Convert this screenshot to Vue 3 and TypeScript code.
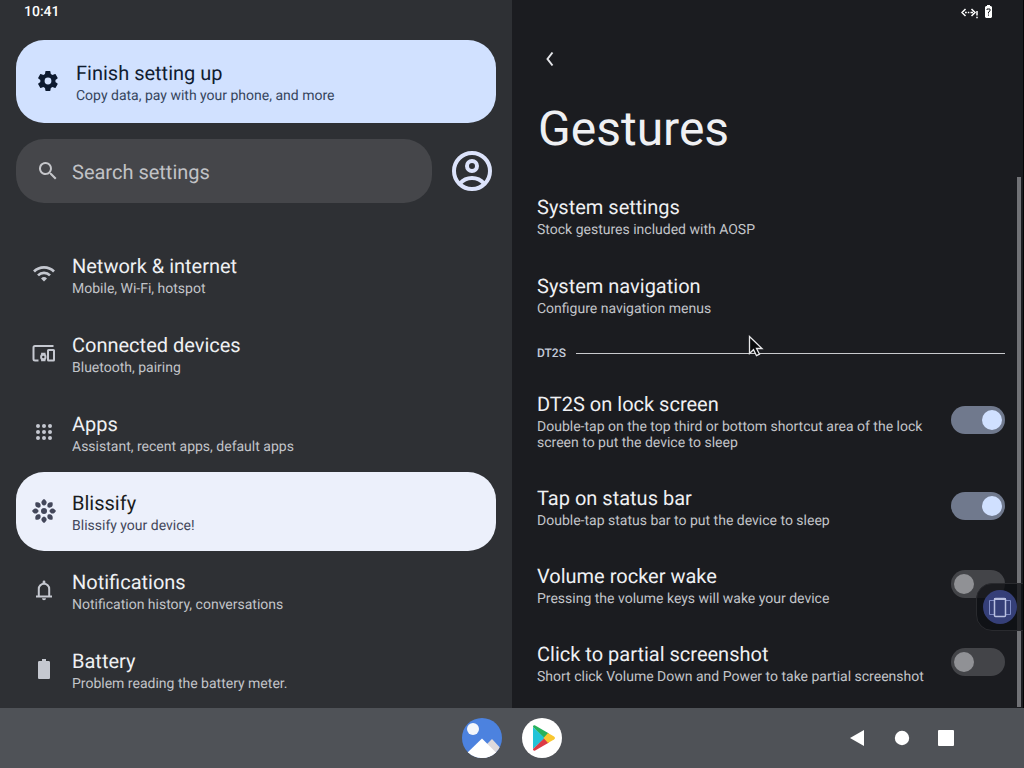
<script setup lang="ts">
import { ref } from 'vue'

interface Category {
  id: string
  title: string
  summary: string
}

interface Gesture {
  id: string
  title: string
  summary: string
  on: boolean
}

const selected = ref('blissify')
const query = ref('')

const categories: Category[] = [
  { id: 'network', title: 'Network & internet', summary: 'Mobile, Wi-Fi, hotspot' },
  { id: 'devices', title: 'Connected devices', summary: 'Bluetooth, pairing' },
  { id: 'apps', title: 'Apps', summary: 'Assistant, recent apps, default apps' },
  { id: 'blissify', title: 'Blissify', summary: 'Blissify your device!' },
  { id: 'notifications', title: 'Notifications', summary: 'Notification history, conversations' },
  { id: 'battery', title: 'Battery', summary: 'Problem reading the battery meter.' },
]

const gestures = ref<Gesture[]>([
  {
    id: 'lock',
    title: 'DT2S on lock screen',
    summary: 'Double-tap on the top third or bottom shortcut area of the lock screen to put the device to sleep',
    on: true,
  },
  { id: 'status', title: 'Tap on status bar', summary: 'Double-tap status bar to put the device to sleep', on: true },
  { id: 'volume', title: 'Volume rocker wake', summary: 'Pressing the volume keys will wake your device', on: false },
  {
    id: 'partial',
    title: 'Click to partial screenshot',
    summary: 'Short click Volume Down and Power to take partial screenshot',
    on: false,
  },
])

const petals = [0, 45, 90, 135, 180, 225, 270, 315]
const dots = [6, 12, 18]
</script>

<template>
  <div class="screen">
    <div class="panes">
      <nav class="pane left" aria-label="Settings">
        <div class="status">10:41</div>

        <a class="suggestion" href="#setup">
          <svg class="icon" viewBox="0 0 24 24" aria-hidden="true">
            <path fill="#0d1a30" fill-rule="evenodd" d="M19.5 12c0-.3 0-.6-.1-1l2.100-1.600c.2-.1.2-.4.1-.6l-2-3.500c-.1-.2-.4-.3-.6-.2l-2.500 1c-.5-.4-1.100-.7-1.700-1l-.4-2.600c0-.3-.2-.5-.5-.5h-4c-.2 0-.4.2-.5.4l-.4 2.700c-.6.200-1.100.6-1.700 1l-2.500-1c-.2-.1-.5 0-.6.2l-2 3.500c-.1.200 0 .5.100.600l2.100 1.600c0 .3-.1.700-.1 1s0 .700.100 1l-2.100 1.600c-.2.100-.2.400-.1.600l2 3.500c.1.200.4.300.6.200l2.500-1c.5.400 1.100.700 1.700 1l.4 2.700c0 .2.2.4.500.4h4c.2 0 .5-.2.500-.4l.4-2.700c.6-.2 1.100-.6 1.700-1l2.500 1c.2.100.5 0 .6-.2l2-3.500c.1-.2.100-.5-.1-.6l-2.100-1.600c.1-.3.100-.6.100-1ZM12 15.400a3.400 3.400 0 1 1 0-6.800 3.400 3.400 0 0 1 0 6.800Z" />
          </svg>
          <span class="texts">
            <span class="title">Finish setting up</span>
            <span class="summary">Copy data, pay with your phone, and more</span>
          </span>
        </a>

        <div class="search-row">
          <label class="search">
            <svg class="icon" viewBox="0 0 24 24" aria-hidden="true">
              <path fill="#c5c6ca" d="M15.500 14h-.8l-.3-.3A6.500 6.500 0 1 0 13.700 14.400l.3.300v.8l5 5 1.500-1.500-5-5Zm-6 0a4.500 4.500 0 1 1 0-9 4.500 4.500 0 0 1 0 9Z" />
            </svg>
            <input v-model="query" type="text" placeholder="Search settings" aria-label="Search settings" />
          </label>
          <button class="avatar" type="button" aria-label="Account">
            <svg viewBox="0 0 40 40" aria-hidden="true" fill="none" stroke="#dce3fb" stroke-width="4">
              <circle cx="20" cy="20" r="18" />
              <circle cx="20" cy="15" r="5" />
              <path d="M8 32.500c3-3.500 7-5.500 12-5.500s9 2 12 5.500" />
            </svg>
          </button>
        </div>

        <div class="categories">
          <a
            v-for="item in categories"
            :key="item.id"
            class="category"
            :class="{ selected: item.id === selected }"
            :href="'#' + item.id"
            @click="selected = item.id"
          >
            <svg class="icon" viewBox="0 0 24 24" aria-hidden="true" fill="none" stroke="currentColor" stroke-width="2">
              <g v-if="item.id === 'network'" stroke-width="2.700">
                <path d="M2 9.500a14.200 14.200 0 0 1 20 0" />
                <path d="M6 13.400a8.600 8.600 0 0 1 12 0" />
                <path d="M12 19.500l-3-3a4.300 4.300 0 0 1 6 0Z" fill="currentColor" stroke="none" />
              </g>
              <g v-else-if="item.id === 'devices'" stroke-width="2">
                <path d="M21.500 5H3a1.500 1.500 0 0 0-1.500 1.500v11.500a1.500 1.500 0 0 0 1.500 1.500H6.500" />
                <rect x="16" y="9" width="6" height="10.500" rx=".5" />
                <circle cx="11.300" cy="16" r="2.200" />
                <path d="M9.800 14v-1.500h3V14M9.800 18v1.500h3V18" stroke-width="1.400" />
              </g>
              <g v-else-if="item.id === 'apps'" fill="currentColor" stroke="none">
                <template v-for="y in dots" :key="y">
                  <circle v-for="x in dots" :key="x" :cx="x" :cy="y" r="2" />
                </template>
              </g>
              <g v-else-if="item.id === 'blissify'" fill="currentColor" stroke="none">
                <circle cx="12" cy="12" r="3" />
                <path v-for="a in petals" :key="a" d="M12 0c1.600 1 2.600 2.200 2.600 3.500S13.500 6.200 12 6.600C10.500 6.200 9.400 4.800 9.400 3.500S10.400 1 12 0Z" :transform="`rotate(${a} 12 12)`" />
              </g>
              <g v-else-if="item.id === 'notifications'">
                <path d="M4 18.500h16M6.800 18v-7a5.200 5.200 0 0 1 10.400 0v7" />
                <path d="M10.600 5.500V4a1.400 1.400 0 0 1 2.800 0v1.500ZM10 20.300h4a2 2 0 0 1-4 0Z" fill="currentColor" stroke="none" />
              </g>
              <path v-else d="M7.300 4H10V2h4v2h2.700c.7 0 1.300.6 1.300 1.300v15.400c0 .7-.6 1.300-1.300 1.300H7.300c-.7 0-1.300-.6-1.300-1.300V5.300C6 4.600 6.600 4 7.300 4Z" fill="currentColor" stroke="none" />
            </svg>
            <span class="texts">
              <span class="title">{{ item.title }}</span>
              <span class="summary">{{ item.summary }}</span>
            </span>
          </a>
        </div>
      </nav>

      <main class="pane right">
        <div class="status indicators">
          <svg class="net" viewBox="0 0 18 12" aria-hidden="true" fill="none" stroke="#fff" stroke-width="1.500">
            <path d="M4.500 2 1 5.500 4.500 9M10.500 2 14 5.500 10.500 9M4 5.500h1.800M6.800 5.500h1.500M9.500 5.500h2.500M16 4v4.500M16 9.700v1.600" />
          </svg>
          <svg class="bat" viewBox="0 0 7 13" aria-hidden="true">
            <path fill="#fff" d="M2 0h3v1h1l1 1v10l-1 1H1l-1-1V2l1-1h1Z" />
            <path fill="none" stroke="#1b1c20" d="M2 5V4h3v2L3.500 7v1.500M3.500 9.500v1.200" />
          </svg>
        </div>

        <button class="back" type="button" aria-label="Back">
          <svg viewBox="0 0 10 16" aria-hidden="true" fill="none" stroke="#e4e5e8" stroke-width="2">
            <path d="M7.500 1.500 2.500 8l5 6.500" />
          </svg>
        </button>

        <h1>Gestures</h1>

        <a class="row" href="#system-settings">
          <span class="texts">
            <span class="title">System settings</span>
            <span class="summary">Stock gestures included with AOSP</span>
          </span>
        </a>
        <a class="row" href="#system-navigation">
          <span class="texts">
            <span class="title">System navigation</span>
            <span class="summary">Configure navigation menus</span>
          </span>
        </a>

        <h2>DT2S</h2>

        <label v-for="g in gestures" :key="g.id" class="row toggle" :for="g.id">
          <span class="texts">
            <span class="title">{{ g.title }}</span>
            <span class="summary">{{ g.summary }}</span>
          </span>
          <input :id="g.id" v-model="g.on" class="switch" type="checkbox" role="switch" />
        </label>

        <div class="scrollbar"></div>
        <button class="floating" type="button" aria-label="Rotate screen">
          <svg viewBox="0 0 34 34" aria-hidden="true" fill="none" stroke="#b9c0e0">
            <path d="M11 10.500H6.500v14H11M23 10.500h4.500v14H23" stroke="#7f8bc4" />
            <rect x="11.500" y="8.500" width="11" height="18" rx="1" stroke-width="1.500" />
            <path d="M11 9h12" stroke-width="2" />
          </svg>
        </button>
        <svg class="cursor" viewBox="0 0 16 22" aria-hidden="true">
          <path d="M1.500 1.500v17l4-3.800 3 6 3-1.500-3-5.700h5.500Z" fill="#08090b" stroke="#e8e8ea" stroke-width="1.300" />
        </svg>
      </main>
    </div>

    <footer class="taskbar">
      <span></span>
      <div class="apps">
        <button type="button" aria-label="Gallery">
          <svg viewBox="0 0 40 40" aria-hidden="true">
            <defs><clipPath id="disc"><circle cx="20" cy="20" r="20" /></clipPath></defs>
            <g clip-path="url(#disc)">
              <rect width="40" height="40" fill="#4c82df" />
              <circle cx="11" cy="11" r="6" fill="#f3f6fb" />
              <path d="M18 33 30 21l12 13v8H18Z" fill="#ddd9dc" />
              <path d="M4 36 20 20.500 34 34.500V42H4Z" fill="#fff" />
            </g>
          </svg>
        </button>
        <button type="button" aria-label="Play Store">
          <svg viewBox="0 0 40 40" aria-hidden="true">
            <circle cx="20" cy="20" r="20" fill="#fff" />
            <path d="M11 9v22L23 20Z" fill="#22c3d8" />
            <path d="M11 9c0-1.500 1-2 2.200-1.400L27 15.500 22.500 20Z" fill="#28b25b" />
            <path d="M11 31c0 1.500 1 2 2.200 1.400L27 24.500 22.500 20Z" fill="#dc3a46" />
            <path d="M26 15l6 3.500c1.300.8 1.300 2.200 0 3L26 25l-4.500-5Z" fill="#f9c730" />
          </svg>
        </button>
      </div>
      <div class="keys">
        <button type="button" aria-label="Back"><svg viewBox="0 0 16 16" aria-hidden="true"><path d="M14 0v16L0 8Z" fill="#fff" /></svg></button>
        <button type="button" aria-label="Home"><svg viewBox="0 0 16 16" aria-hidden="true"><circle cx="8" cy="8" r="7.200" fill="#fff" /></svg></button>
        <button type="button" aria-label="Recent apps"><svg viewBox="0 0 16 16" aria-hidden="true"><rect width="16" height="16" rx="1" fill="#fff" /></svg></button>
      </div>
    </footer>
  </div>
</template>

<style>
body {
  margin: 0;
  background: #2e3034;
}
</style>

<style scoped>
.screen {
  display: flex;
  flex-direction: column;
  height: 100vh;
  font-family: Roboto, "Liberation Sans", sans-serif;
  text-rendering: geometricPrecision;
  color: #eff0f3;
}

button {
  display: flex;
  padding: 0;
  border: 0;
  background: none;
  cursor: pointer;
}

a {
  color: inherit;
  text-decoration: none;
}

.panes {
  flex: 1;
  min-height: 0;
  display: grid;
  grid-template-columns: 1fr 1fr;
}

.pane {
  overflow: hidden;
}

.left {
  padding: 0 16px;
  background: #2e3034;
}

.right {
  position: relative;
  padding: 0 18px 0 25px;
  background: #1b1c20;
  border-right: 1px solid #050506;
}

.status {
  display: flex;
  align-items: center;
  height: 24px;
  margin-bottom: 16px;
  padding-left: 8px;
  font-size: 14px;
  font-weight: 500;
  color: #fff;
}

.indicators {
  justify-content: flex-end;
  gap: 6px;
  padding-right: 13px;
}

.net {
  width: 18px;
  height: 12px;
  margin-top: 2px;
}

.bat {
  width: 7px;
  height: 13px;
  margin-bottom: 2px;
}

.icon {
  flex: none;
  width: 24px;
  height: 24px;
}

.texts {
  display: flex;
  flex-direction: column;
  gap: 3px;
  min-width: 0;
}

.title {
  font-size: 20px;
  line-height: 24px;
}

.summary {
  font-size: 14px;
  line-height: 16px;
  color: #c2c4c9;
}

.suggestion {
  display: flex;
  align-items: center;
  gap: 16px;
  padding: 21px 20px 19px;
  border-radius: 28px;
  background: #d1e1ff;
  color: #101c30;
}

.suggestion .icon,
.category .icon {
  margin-bottom: 4px;
}

.suggestion .summary {
  color: #36455d;
}

.search-row {
  display: flex;
  align-items: center;
  gap: 20px;
  margin: 16px 0 32px;
  padding-right: 4px;
}

.search {
  flex: 1;
  display: flex;
  align-items: center;
  gap: 12px;
  height: 64px;
  padding: 0 20px;
  border-radius: 28px;
  background: #45464a;
}

.search input {
  flex: 1;
  min-width: 0;
  padding: 2px 0 0;
  border: 0;
  outline: 0;
  background: none;
  font: 20px Roboto, "Liberation Sans", sans-serif;
  text-rendering: inherit;
  color: #eff0f3;
}

.search input::placeholder {
  color: #c1c2c6;
  opacity: 1;
}

.avatar svg {
  width: 40px;
  height: 40px;
}

.category {
  display: flex;
  align-items: center;
  gap: 16px;
  padding: 19px 16px 17px;
  border-radius: 28px;
}

.category .icon {
  color: #c5c8d0;
}

.category.selected {
  background: #ecf0fb;
  color: #1a1c20;
}

.category.selected .icon,
.category.selected .summary {
  color: #43475a;
}

.back {
  align-items: center;
  justify-content: center;
  width: 26px;
  height: 38px;
}

.back svg {
  width: 10px;
  height: 16px;
}

h1 {
  margin: 22px 0 18px;
  padding-left: 1px;
  font-size: 48px;
  line-height: 58px;
  font-weight: 400;
}

.row {
  display: flex;
  align-items: center;
  justify-content: space-between;
  gap: 16px;
  padding: 19px 0 17px;
}

.toggle {
  padding-bottom: 16px;
}

h2 {
  display: flex;
  align-items: center;
  gap: 10px;
  margin: 0;
  font-size: 12px;
  line-height: 39px;
  font-weight: 500;
  color: #c3cad8;
}

h2::after {
  content: "";
  flex: 1;
  height: 1px;
  background: #c9cacd;
}

.switch {
  appearance: none;
  flex: none;
  display: flex;
  align-items: center;
  width: 54px;
  height: 28px;
  margin: 0 0 4px;
  padding: 0 3px;
  border-radius: 14px;
  background: #434448;
}

.switch::before {
  content: "";
  width: 20px;
  height: 20px;
  border-radius: 50%;
  background: #909195;
}

.switch:checked {
  justify-content: flex-end;
  background: #70798d;
}

.switch:checked::before {
  background: #d0e0ff;
}

.scrollbar {
  position: absolute;
  top: 177px;
  right: 2px;
  bottom: 1px;
  width: 4px;
  background: #717276;
}

.floating {
  position: absolute;
  right: -1px;
  bottom: 77px;
  padding: 6px;
  border: 1px solid #292a2e;
  border-radius: 16px 0 0 16px;
  background: rgba(14, 15, 19, 0.75);
}

.floating svg {
  width: 34px;
  height: 34px;
  border-radius: 50%;
  background: #353f78;
}

.cursor {
  position: absolute;
  left: 236px;
  top: 335px;
  width: 16px;
  height: 22px;
}

.taskbar {
  display: grid;
  grid-template-columns: 1fr auto 1fr;
  align-items: center;
  height: 60px;
  background: #4f5257;
}

.apps {
  display: flex;
  gap: 20px;
}

.apps svg {
  width: 40px;
  height: 40px;
}

.keys {
  display: flex;
  justify-content: flex-end;
  gap: 28px;
  padding-right: 70px;
}

.keys svg {
  width: 16px;
  height: 16px;
}
</style>
